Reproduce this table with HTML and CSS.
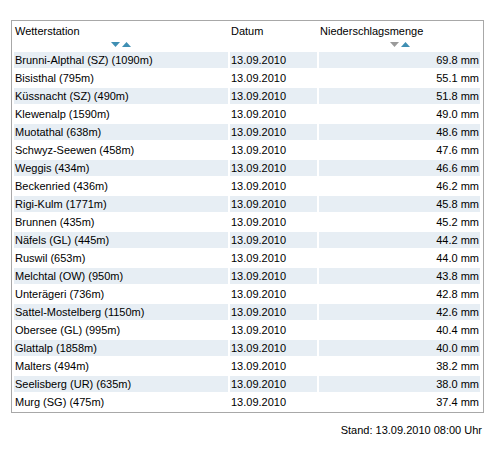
FILE: index.html
```html
<!DOCTYPE html>
<html lang="de">
<head>
<meta charset="utf-8">
<title>Niederschlagsmenge</title>
<link rel="stylesheet" href="styles.css">
</head>
<body>
<div class="page">
  <div class="box">
    <table class="data">
      <colgroup>
        <col class="c1"><col class="c2"><col class="c3">
      </colgroup>
      <thead>
        <tr>
          <th>
            <div class="label">Wetterstation</div>
            <div class="sort">
              <svg width="9" height="5" viewBox="0 0 9 5"><polygon points="0,0 9,0 4.5,5" fill="#3f8fb3"/></svg>
              <svg width="9" height="5" viewBox="0 0 9 5"><polygon points="0,5 9,5 4.5,0" fill="#3f8fb3"/></svg>
            </div>
          </th>
          <th><div class="label">Datum</div></th>
          <th>
            <div class="label">Niederschlagsmenge</div>
            <div class="sort">
              <svg width="9" height="5" viewBox="0 0 9 5"><polygon points="0,0 9,0 4.5,5" fill="#9a9a9a"/></svg>
              <svg width="9" height="5" viewBox="0 0 9 5"><polygon points="0,5 9,5 4.5,0" fill="#3f8fb3"/></svg>
            </div>
          </th>
        </tr>
      </thead>
      <tbody>
        <tr class="alt"><td>Brunni-Alpthal (SZ) (1090m)</td><td>13.09.2010</td><td class="num">69.8 mm</td></tr>
        <tr><td>Bisisthal (795m)</td><td>13.09.2010</td><td class="num">55.1 mm</td></tr>
        <tr class="alt"><td>Küssnacht (SZ) (490m)</td><td>13.09.2010</td><td class="num">51.8 mm</td></tr>
        <tr><td>Klewenalp (1590m)</td><td>13.09.2010</td><td class="num">49.0 mm</td></tr>
        <tr class="alt"><td>Muotathal (638m)</td><td>13.09.2010</td><td class="num">48.6 mm</td></tr>
        <tr><td>Schwyz-Seewen (458m)</td><td>13.09.2010</td><td class="num">47.6 mm</td></tr>
        <tr class="alt"><td>Weggis (434m)</td><td>13.09.2010</td><td class="num">46.6 mm</td></tr>
        <tr><td>Beckenried (436m)</td><td>13.09.2010</td><td class="num">46.2 mm</td></tr>
        <tr class="alt"><td>Rigi-Kulm (1771m)</td><td>13.09.2010</td><td class="num">45.8 mm</td></tr>
        <tr><td>Brunnen (435m)</td><td>13.09.2010</td><td class="num">45.2 mm</td></tr>
        <tr class="alt"><td>Näfels (GL) (445m)</td><td>13.09.2010</td><td class="num">44.2 mm</td></tr>
        <tr><td>Ruswil (653m)</td><td>13.09.2010</td><td class="num">44.0 mm</td></tr>
        <tr class="alt"><td>Melchtal (OW) (950m)</td><td>13.09.2010</td><td class="num">43.8 mm</td></tr>
        <tr><td>Unterägeri (736m)</td><td>13.09.2010</td><td class="num">42.8 mm</td></tr>
        <tr class="alt"><td>Sattel-Mostelberg (1150m)</td><td>13.09.2010</td><td class="num">42.6 mm</td></tr>
        <tr><td>Obersee (GL) (995m)</td><td>13.09.2010</td><td class="num">40.4 mm</td></tr>
        <tr class="alt"><td>Glattalp (1858m)</td><td>13.09.2010</td><td class="num">40.0 mm</td></tr>
        <tr><td>Malters (494m)</td><td>13.09.2010</td><td class="num">38.2 mm</td></tr>
        <tr class="alt"><td>Seelisberg (UR) (635m)</td><td>13.09.2010</td><td class="num">38.0 mm</td></tr>
        <tr><td>Murg (SG) (475m)</td><td>13.09.2010</td><td class="num">37.4 mm</td></tr>
      </tbody>
    </table>
  </div>
  <div class="stand">Stand: 13.09.2010 08:00 Uhr</div>
</div>
</body>
</html>
```

FILE: styles.css
```css
html, body {
  margin: 0;
  padding: 0;
  background: #fff;
}

body {
  font-family: "Liberation Sans", Arial, sans-serif;
  font-size: 11px;
  color: #000;
}

.page {
  padding: 20px 0 0 11px;
  width: 473px;
}

.box {
  border: 1px solid #a8a8a8;
  padding: 0 1px 0 0;
  width: 470px;
}

.data {
  width: 470px;
  border-collapse: separate;
  border-spacing: 2px;
  table-layout: fixed;
}

.c1 { width: 214px; }
.c2 { width: 87px; }
.c3 { width: 161px; }

.data th {
  height: 27px;
  box-sizing: border-box;
  padding: 1px 1px 3px 1px;
  text-align: left;
  font-weight: normal;
  vertical-align: top;
}

.label {
  line-height: 14px;
  white-space: nowrap;
}

.sort {
  margin-top: 4px;
  height: 5px;
  display: flex;
  justify-content: center;
  gap: 2px;
}

.sort svg {
  display: block;
}

.data td {
  height: 16px;
  padding: 0 1px;
  line-height: 16px;
  white-space: nowrap;
  overflow: hidden;
}

.data tr.alt td {
  background: #e7eef4;
}

.data td.num {
  text-align: right;
}

.stand {
  margin-top: 11px;
  padding-right: 2px;
  text-align: right;
  line-height: 13px;
}
```
